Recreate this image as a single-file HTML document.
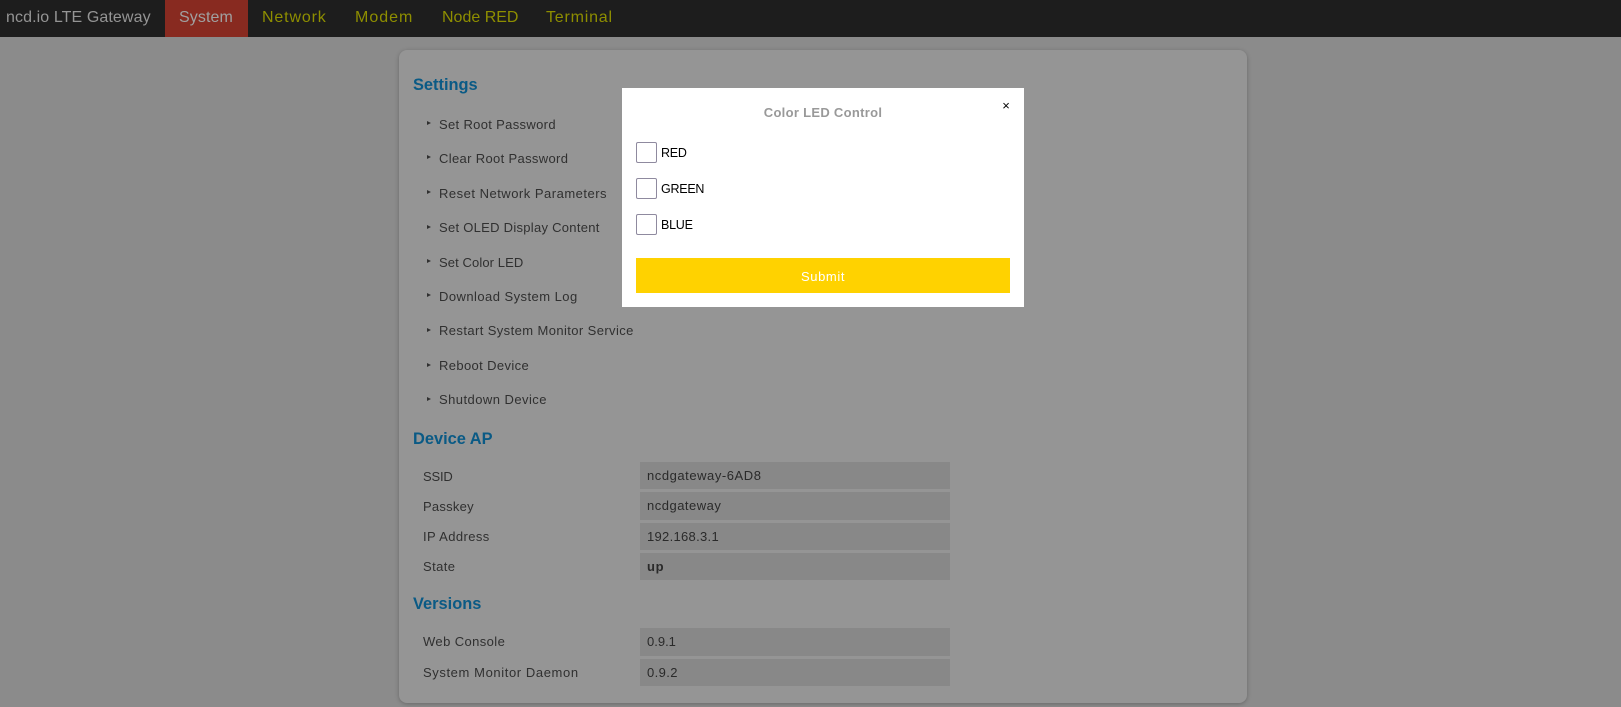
<!DOCTYPE html>
<html>
<head>
<meta charset="utf-8">
<style>
html,body{margin:0;padding:0;width:1621px;height:707px;overflow:hidden;background:#8b8b8b;font-family:"Liberation Sans",sans-serif}
.a{position:absolute;white-space:nowrap}
#nav{position:absolute;left:0;top:0;width:1621px;height:37px;background:#1d1d1d}
.n{position:absolute;top:0;line-height:35px;font-size:16px;color:#8e8e00;white-space:nowrap}
#sys{position:absolute;left:165px;top:0;width:83px;height:37px;background:#882a20}
#card{position:absolute;left:399px;top:50px;width:848px;height:653px;background:#959595;border-radius:8px;box-shadow:0 1px 4px rgba(0,0,0,.25)}
.h{position:absolute;left:413px;font-size:16.4px;font-weight:bold;line-height:22px;color:#0a5a85;white-space:nowrap}
.l{position:absolute;left:439px;font-size:13px;line-height:18px;color:#303030;white-space:nowrap}
.b{position:absolute;left:427px;width:0;height:0;border-left:4px solid #303030;border-top:2.5px solid transparent;border-bottom:2.5px solid transparent}
.k{position:absolute;left:423px;font-size:13px;line-height:18px;color:#303030;white-space:nowrap}
.v{position:absolute;left:640px;width:303px;padding-left:7px;background:#888;font-size:13px;color:#2a2a2a;white-space:nowrap}
#modal{position:absolute;left:622px;top:88px;width:402px;height:219px;background:#fff}
.c{position:absolute;left:636px;width:19px;height:19px;border:1px solid #8f8a9f;border-radius:2px;background:#fff}
.t{position:absolute;left:661px;font-size:12.5px;letter-spacing:-.25px;line-height:18px;color:#000}
</style>
</head>
<body>
<div id="nav"></div>
<div id="sys"></div>
<div class="n" style="left:6px;color:#949494;letter-spacing:.1px">ncd.io LTE Gateway</div>
<div class="n" style="left:179px;color:#a0a0a0;letter-spacing:.1px">System</div>
<div class="n" style="left:262px;letter-spacing:.85px">Network</div>
<div class="n" style="left:355px;letter-spacing:1px">Modem</div>
<div class="n" style="left:442px">Node RED</div>
<div class="n" style="left:546px;letter-spacing:.8px">Terminal</div>

<div id="card"></div>
<div class="h" style="top:74px">Settings</div>

<div class="b" style="top:121px"></div><div class="l" style="top:116px;letter-spacing:.33px">Set Root Password</div>
<div class="b" style="top:155px"></div><div class="l" style="top:150px;letter-spacing:.34px">Clear Root Password</div>
<div class="b" style="top:190px"></div><div class="l" style="top:185px;letter-spacing:.5px">Reset Network Parameters</div>
<div class="b" style="top:225px"></div><div class="l" style="top:219px;letter-spacing:.28px">Set OLED Display Content</div>
<div class="b" style="top:259px"></div><div class="l" style="top:254px;letter-spacing:.1px">Set Color LED</div>
<div class="b" style="top:293px"></div><div class="l" style="top:288px;letter-spacing:.45px">Download System Log</div>
<div class="b" style="top:328px"></div><div class="l" style="top:322px;letter-spacing:.4px">Restart System Monitor Service</div>
<div class="b" style="top:363px"></div><div class="l" style="top:357px;letter-spacing:.37px">Reboot Device</div>
<div class="b" style="top:397px"></div><div class="l" style="top:391px;letter-spacing:.45px">Shutdown Device</div>

<div class="h" style="top:428px">Device AP</div>
<div class="k" style="top:468px;letter-spacing:-.2px">SSID</div>
<div class="v" style="top:462px;height:27px;line-height:27px;letter-spacing:.55px">ncdgateway-6AD8</div>
<div class="k" style="top:498px;letter-spacing:.25px">Passkey</div>
<div class="v" style="top:492px;height:28px;line-height:28px;letter-spacing:.5px">ncdgateway</div>
<div class="k" style="top:528px;letter-spacing:.4px">IP Address</div>
<div class="v" style="top:523px;height:27px;line-height:27px;letter-spacing:.3px">192.168.3.1</div>
<div class="k" style="top:558px;letter-spacing:.4px">State</div>
<div class="v" style="top:553px;height:27px;line-height:27px;font-weight:bold;letter-spacing:.7px">up</div>

<div class="h" style="top:593px">Versions</div>
<div class="k" style="top:633px;letter-spacing:.4px">Web Console</div>
<div class="v" style="top:628px;height:28px;line-height:28px;letter-spacing:0">0.9.1</div>
<div class="k" style="top:664px;letter-spacing:.6px">System Monitor Daemon</div>
<div class="v" style="top:659px;height:27px;line-height:27px;letter-spacing:.4px">0.9.2</div>

<div id="modal"></div>
<div class="a" style="left:622px;width:402px;top:104px;text-align:center;font-size:13px;font-weight:bold;letter-spacing:.3px;line-height:18px;color:#999">Color LED Control</div>
<div class="a" style="left:1000px;top:97px;width:12px;text-align:center;font-size:13px;line-height:18px;color:#000">×</div>
<div class="c" style="top:142px"></div><div class="t" style="top:144px">RED</div>
<div class="c" style="top:178px"></div><div class="t" style="top:180px">GREEN</div>
<div class="c" style="top:214px"></div><div class="t" style="top:216px">BLUE</div>
<div class="a" style="left:636px;top:258px;width:374px;height:35px;line-height:37px;background:#ffd200;color:#fff;text-align:center;font-size:13px;letter-spacing:.6px">Submit</div>
</body>
</html>
